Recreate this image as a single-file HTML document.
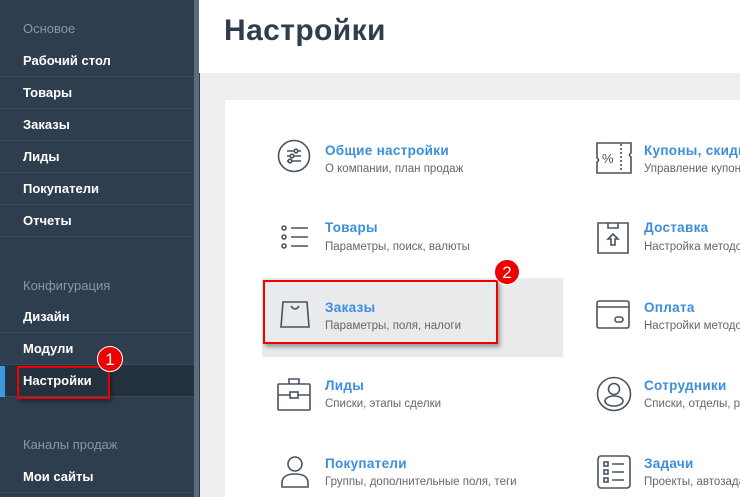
<!DOCTYPE html>
<html><head><meta charset="utf-8"><style>
*{margin:0;padding:0;box-sizing:border-box}
body{width:740px;height:497px;overflow:hidden;position:relative;font-family:"Liberation Sans","DejaVu Sans",sans-serif;background:#eeeeee}
.sb{position:absolute;left:0;top:0;width:200px;height:497px;background:#2f3e4e}
.strip{position:absolute;left:194px;top:0;width:5px;height:497px;background:#5c6c7c}
.h{position:absolute;left:23px;font-size:13px;color:#8a96a2}
.it{position:absolute;left:0;width:194px;height:32px;border-bottom:1px solid #3a4a5a;color:#fff;font-size:13px;font-weight:bold;padding-left:23px;line-height:32px}
.hdr{position:absolute;left:199px;top:0;width:541px;height:73px;background:#fff}
.hdr h1{position:absolute;left:25px;top:14px;font-size:30px;font-weight:bold;color:#2f3e4e;letter-spacing:0.4px}
.card{position:absolute;left:225px;top:100px;width:515px;height:397px;background:#fff}
.t{position:absolute;font-size:13.5px;font-weight:bold;color:#3b8ede;white-space:nowrap;letter-spacing:0.3px}
.s{position:absolute;font-size:11.5px;color:#666;white-space:nowrap}
svg.i{position:absolute}
.badge{position:absolute;width:26px;height:26px;border-radius:50%;background:#e00;color:#fff;font-size:17px;text-align:center;line-height:26px;border:1px solid #fff}
.rb{position:absolute;border:2px solid #e00;box-shadow:2px 3px 4px rgba(0,0,0,.35)}
</style></head><body>
<div class="sb"></div><div class="strip"></div>
<div class="h" style="top:21px">Основое</div>
<div class="it" style="top:45px">Рабочий стол</div>
<div class="it" style="top:77px">Товары</div>
<div class="it" style="top:109px">Заказы</div>
<div class="it" style="top:141px">Лиды</div>
<div class="it" style="top:173px">Покупатели</div>
<div class="it" style="top:205px">Отчеты</div>
<div class="h" style="top:278px">Конфигурация</div>
<div class="it" style="top:301px">Дизайн</div>
<div class="it" style="top:333px">Модули</div>
<div class="it" style="top:365px;background:#24313f">Настройки</div>
<div style="position:absolute;left:0;top:366px;width:5px;height:31px;background:#3b9be0"></div>
<div class="h" style="top:437px">Каналы продаж</div>
<div class="it" style="top:461px">Мои сайты</div>
<div class="rb" style="left:17px;top:366px;width:93px;height:33px"></div>
<div class="badge" style="left:97px;top:346px">1</div>

<div class="hdr"><h1>Настройки</h1></div>
<div class="card"></div>
<div style="position:absolute;left:262px;top:278px;width:301px;height:79px;background:#e9eaeb"></div>

<svg class="i" style="left:277px;top:139px" width="34" height="34" viewBox="0 0 34 34" fill="none" stroke="#4a5360" stroke-width="1.6"><circle cx="17" cy="17" r="15.5"/><path d="M10 12h14M10 17h14M10 22h14"/><circle cx="19" cy="12" r="1.8" fill="#fff"/><circle cx="15" cy="17" r="1.8" fill="#fff"/><circle cx="13" cy="22" r="1.8" fill="#fff"/></svg>
<div class="t" style="left:325px;top:143px">Общие настройки</div>
<div class="s" style="left:325px;top:163px">О компании, план продаж</div>

<svg class="i" style="left:280px;top:224px" width="30" height="28" viewBox="0 0 30 28" fill="none" stroke="#4a5360" stroke-width="1.6"><circle cx="4" cy="4" r="2"/><circle cx="4" cy="13" r="2"/><circle cx="4" cy="22" r="2"/><path d="M11 4h17M11 13h17M11 22h17"/></svg>
<div class="t" style="left:325px;top:220px">Товары</div>
<div class="s" style="left:325px;top:241px">Параметры, поиск, валюты</div>

<svg class="i" style="left:280px;top:299px" width="30" height="30" viewBox="0 0 30 30" fill="none" stroke="#4a5360" stroke-width="1.6"><path d="M3 3h24l2 25H1z"/><path d="M11 7q4 6 8 0"/></svg>
<div class="t" style="left:325px;top:300px">Заказы</div>
<div class="s" style="left:325px;top:320px">Параметры, поля, налоги</div>
<div class="rb" style="left:263px;top:280px;width:235px;height:64px"></div>
<div class="badge" style="left:494px;top:259px">2</div>

<svg class="i" style="left:277px;top:377px" width="34" height="34" viewBox="0 0 34 34" fill="none" stroke="#4a5360" stroke-width="1.6"><rect x="1" y="7" width="32" height="26" rx="1"/><path d="M12 7V2h10v5M1 18h32"/><rect x="13" y="15" width="8" height="6" fill="#fff"/></svg>
<div class="t" style="left:325px;top:378px">Лиды</div>
<div class="s" style="left:325px;top:398px">Списки, этапы сделки</div>

<svg class="i" style="left:280px;top:455px" width="30" height="34" viewBox="0 0 30 34" fill="none" stroke="#4a5360" stroke-width="1.6"><circle cx="15" cy="9" r="7"/><path d="M2 32v-4q0-9 13-9q13 0 13 9v4z"/></svg>
<div class="t" style="left:325px;top:456px">Покупатели</div>
<div class="s" style="left:325px;top:476px">Группы, дополнительные поля, теги</div>

<svg class="i" style="left:596px;top:142px" width="36" height="32" viewBox="0 0 36 32" fill="none" stroke="#4a5360" stroke-width="1.6"><path d="M1 1h34v10q-3 2 0 4v16H1V20q3-2 0-4z"/><path d="M25 2v28" stroke-dasharray="2 2"/><text x="6" y="21" font-size="13" fill="#4a5360" stroke="none" font-family="Liberation Sans">%</text></svg>
<div class="t" style="left:644px;top:143px">Купоны, скидки</div>
<div class="s" style="left:644px;top:163px">Управление купонами</div>

<svg class="i" style="left:597px;top:222px" width="32" height="32" viewBox="0 0 32 32" fill="none" stroke="#4a5360" stroke-width="1.6"><path d="M1 1h30v30H1z"/><path d="M11 1v5h10V1"/><path d="M16 12l-5 5h3v6h4v-6h3z"/></svg>
<div class="t" style="left:644px;top:220px">Доставка</div>
<div class="s" style="left:644px;top:241px">Настройка методов</div>

<svg class="i" style="left:596px;top:300px" width="34" height="30" viewBox="0 0 34 30" fill="none" stroke="#4a5360" stroke-width="1.6"><rect x="1" y="1" width="32" height="27" rx="2"/><path d="M1 7h32"/><rect x="19" y="17" width="8" height="5" rx="2.5"/></svg>
<div class="t" style="left:644px;top:300px">Оплата</div>
<div class="s" style="left:644px;top:320px">Настройки методов</div>

<svg class="i" style="left:596px;top:376px" width="36" height="36" viewBox="0 0 36 36" fill="none" stroke="#4a5360" stroke-width="1.6"><circle cx="18" cy="18" r="16.5"/><circle cx="18" cy="13" r="5.5"/><ellipse cx="18" cy="25" rx="9" ry="5"/></svg>
<div class="t" style="left:644px;top:378px">Сотрудники</div>
<div class="s" style="left:644px;top:398px">Списки, отделы, роли</div>

<svg class="i" style="left:597px;top:455px" width="34" height="34" viewBox="0 0 34 34" fill="none" stroke="#4a5360" stroke-width="1.6"><rect x="1" y="1" width="32" height="32" rx="3"/><rect x="7" y="7" width="4" height="4"/><rect x="7" y="15" width="4" height="4"/><rect x="7" y="23" width="4" height="4"/><path d="M15 9h12M15 17h12M15 25h12"/></svg>
<div class="t" style="left:644px;top:456px">Задачи</div>
<div class="s" style="left:644px;top:476px">Проекты, автозадачи</div>
</body></html>
